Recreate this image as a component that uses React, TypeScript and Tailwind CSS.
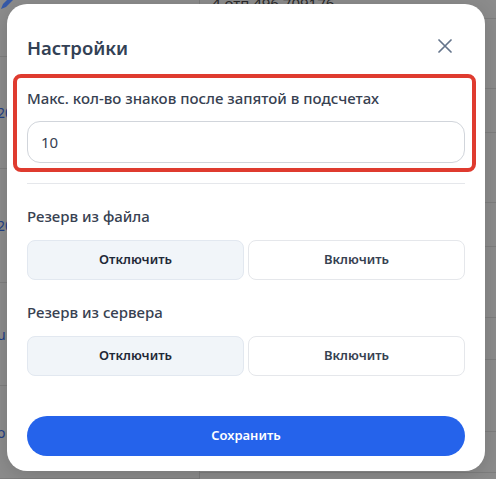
import React from "react";

function Bg() {
  const leftRows = [
    { h: "h-[57px]", t: "" },
    { h: "h-[112px]", t: "20" },
    { h: "h-[114px]", t: "20" },
    { h: "h-[103px]", t: "u" },
    { h: "h-[93px]", t: "o" },
  ];
  const rightRows = ["h-[19px]", "h-[70px]", "h-[44px]", "h-[70px]", "h-[44px]", "h-[71px]", "h-[42px]", "h-[72px]", "h-[41px]"];
  return (
    <div className="flex h-[479px] w-[496px]">
      <div className="w-[200px] border-r border-[#7c7c7c] flex flex-col">
        {leftRows.map((r, i) => (
          <div key={i} className={`${r.h} border-b border-[#7e7e7e] flex items-center`}>
            <span className="-ml-[3px] text-[14px] text-[#1f3f86]">{r.t}</span>
          </div>
        ))}
      </div>
      <div className="flex-1 flex flex-col">
        {rightRows.map((h, i) => (
          <div key={i} className={`${h} border-b border-[#7e7e7e]`}>
            {i === 0 && (
              <span className="block -mt-[8px] ml-[12px] text-[15px] text-[#2a2a2a]">4 отп 496 709176</span>
            )}
          </div>
        ))}
      </div>
    </div>
  );
}

export default function App() {
  return (
    <div className="relative w-[496px] h-[479px] overflow-hidden bg-[#8c8c8c] font-['Noto_Sans',sans-serif]">
      <Bg />
      <svg className="absolute left-0 top-0" width="14" height="10" viewBox="0 0 14 10">
        <path d="M1 9 L3 4 L10 -3 L13 0 L6 7 Z" fill="#3559a8" />
      </svg>
      <div className="absolute left-[7px] top-[4px] w-[478px] h-[467px] bg-white rounded-[20px] shadow-[0_4px_20px_rgba(0,0,0,0.15)] px-5 flex flex-col">
        <div className="flex items-center justify-between pt-[29px] h-[57px]">
          <h2 className="text-[18.5px] leading-[28px] font-semibold text-[#334155] mt-[1px]">Настройки</h2>
          <svg className="mr-[13px] -mt-[2px]" width="14" height="14" viewBox="0 0 14 14" fill="none" stroke="#64748b" strokeWidth="1.7" strokeLinecap="round">
            <path d="M1 1 L13 13 M13 1 L1 13" />
          </svg>
        </div>
        <div className="mt-[13px] -ml-[14px] -mr-[11px] border-4 border-[#df3b2f] rounded-[8px] pl-[10px] pr-[7px] pt-[10px] pb-[5px]">
          <div className="text-[15px] leading-[20px] font-medium text-[#374151]">Макс. кол-во знаков после запятой в подсчетах</div>
          <div className="mt-[13px] h-[42px] rounded-[13px] border border-[#d1d5db] flex items-center pl-[13px] text-[15px] text-[#374151]">10</div>
        </div>
        <div className="mt-[11px] h-px bg-[#e5e7eb]" />
        <div className="mt-[22px] text-[15px] leading-[20px] font-medium text-[#374151]">Резерв из файла</div>
        <div className="mt-[14px] grid grid-cols-2 gap-[4px]">
          <button className="h-[40px] rounded-[8px] bg-[#f1f5f9] border border-[#e2e8f0] text-[13px] font-semibold text-[#1f2937]">Отключить</button>
          <button className="h-[40px] rounded-[8px] bg-white border border-[#e5e7eb] text-[13px] font-semibold text-[#374151]">Включить</button>
        </div>
        <div className="mt-[22px] text-[15px] leading-[20px] font-medium text-[#374151]">Резерв из сервера</div>
        <div className="mt-[14px] grid grid-cols-2 gap-[4px]">
          <button className="h-[40px] rounded-[8px] bg-[#f1f5f9] border border-[#e2e8f0] text-[13px] font-semibold text-[#1f2937]">Отключить</button>
          <button className="h-[40px] rounded-[8px] bg-white border border-[#e5e7eb] text-[13px] font-semibold text-[#374151]">Включить</button>
        </div>
        <button className="mt-[40px] h-[40px] rounded-full bg-[#2563eb] text-white text-[13px] font-semibold">Сохранить</button>
      </div>
    </div>
  );
}
